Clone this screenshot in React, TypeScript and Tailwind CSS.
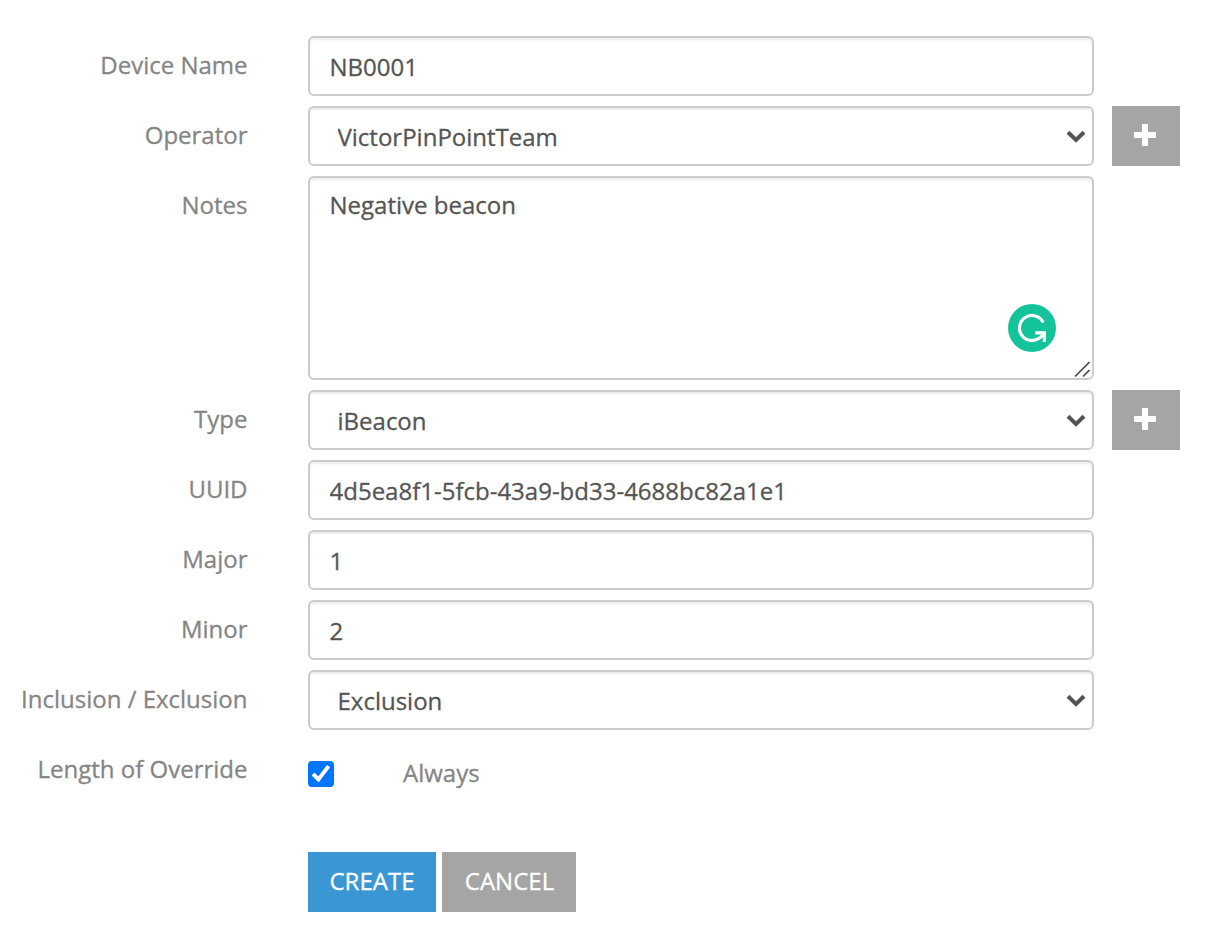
import type { ReactNode } from "react";

const control =
  "block w-full rounded-[6px] border-2 border-[#cccccc] bg-white text-[#555555] outline-none shadow-[inset_0_2px_2px_rgba(0,0,0,0.075)]";

function Row({ label, id, children }: { label: string; id: string; children: ReactNode }) {
  return (
    <div className="flex items-start">
      <label htmlFor={id} className="w-[247.5px] shrink-0 text-right leading-[58px] whitespace-nowrap">
        {label}
      </label>
      <div className="ml-[60.5px] flex gap-[18px]">{children}</div>
    </div>
  );
}

function TextRow({ label, id, value }: { label: string; id: string; value: string }) {
  return (
    <Row label={label} id={id}>
      <div className="w-[786px]">
        <input id={id} defaultValue={value} className={`${control} h-[60px] px-[19.5px] pt-px pb-px`} />
      </div>
    </Row>
  );
}

function SelectRow({ label, id, value, addable }: { label: string; id: string; value: string; addable?: boolean }) {
  return (
    <Row label={label} id={id}>
      <div className="relative w-[786px]">
        <select id={id} defaultValue={value} className={`${control} h-[60px] appearance-none pt-[3px] pr-12 pb-px pl-[27.5px]`}>
          <option>{value}</option>
        </select>
        <svg className="pointer-events-none absolute top-[24px] right-[8px] h-[13px] w-[20px]" viewBox="0 0 20 13" fill="none">
          <path d="M2 2.2 10 10 18 2.2" stroke="#555555" strokeWidth="4" />
        </svg>
      </div>
      {addable && (
        <button type="button" aria-label={`Add ${label}`} className="flex h-[60px] w-[68px] justify-center bg-[#a5a5a5] pt-[18px] pr-[2px]">
          <svg className="h-[22px] w-[22px]" viewBox="0 0 22 22" fill="white">
            <rect x="8" y="0" width="6" height="22" rx="1" />
            <rect x="0" y="8" width="22" height="6" rx="1" />
          </svg>
        </button>
      )}
    </Row>
  );
}

export default function App() {
  return (
    <form className="flex h-[934px] w-[1210px] flex-col gap-[10px] overflow-hidden bg-white pt-9 font-['Open_Sans',sans-serif] text-[24px] text-[#858585] [-webkit-text-stroke:0.3px]">
      <TextRow label="Device Name" id="name" value="NB0001" />
      <SelectRow label="Operator" id="operator" value="VictorPinPointTeam" addable />
      <Row label="Notes" id="notes">
        <div className="relative w-[786px]">
          <textarea
            id="notes"
            spellCheck={false}
            defaultValue="Negative beacon"
            className={`${control} h-[204px] resize-none px-[19.5px] pt-[10px] leading-[34px]`}
          />
          <svg className="absolute top-[128px] left-[700px] h-12 w-12" viewBox="0 0 48 48" fill="none">
            <circle cx="24" cy="24" r="24" fill="#15c39a" />
            <path d="M34.6 17.4A12.5 12.5 0 1 0 32.2 33.4Q34 32 36 29.4" stroke="white" strokeWidth="3.2" strokeLinecap="round" />
            <path d="M27 28.9H36.3V38" stroke="white" strokeWidth="3.1" />
          </svg>
          <svg className="pointer-events-none absolute top-[185px] left-[766px] h-4 w-4" viewBox="0 0 16 16" fill="none">
            <path d="M1 15.5 15.5 1M9 15.5 15.5 9" stroke="#4b4b4b" strokeWidth="1.6" />
          </svg>
        </div>
      </Row>
      <SelectRow label="Type" id="type" value="iBeacon" addable />
      <TextRow label="UUID" id="uuid" value="4d5ea8f1-5fcb-43a9-bd33-4688bc82a1e1" />
      <TextRow label="Major" id="major" value="1" />
      <TextRow label="Minor" id="minor" value="2" />
      <SelectRow label="Inclusion / Exclusion" id="mode" value="Exclusion" />
      <Row label="Length of Override" id="always">
        <div className="flex h-[68px] items-center">
          <span className="relative h-[26px] w-[26px]">
            <input id="always" type="checkbox" defaultChecked className="block h-[26px] w-[26px] appearance-none rounded-[4px] bg-[#0075ff]" />
            <svg className="pointer-events-none absolute inset-0 h-[26px] w-[26px]" viewBox="0 0 26 26" fill="none">
              <path d="M5 13 10.4 18.4 20.6 5.1" stroke="white" strokeWidth="4" />
            </svg>
          </span>
          <span className="ml-[69px] pb-[2px] leading-[66px]">Always</span>
        </div>
      </Row>
      <div className="mt-[34px] ml-[308px] flex gap-[6px] text-white">
        <button type="submit" className="h-[60px] w-[128px] bg-[#3b97d3] pb-[3px]">CREATE</button>
        <button type="button" className="h-[60px] w-[134px] bg-[#a5a5a5] pb-[3px] pl-px">CANCEL</button>
      </div>
    </form>
  );
}
